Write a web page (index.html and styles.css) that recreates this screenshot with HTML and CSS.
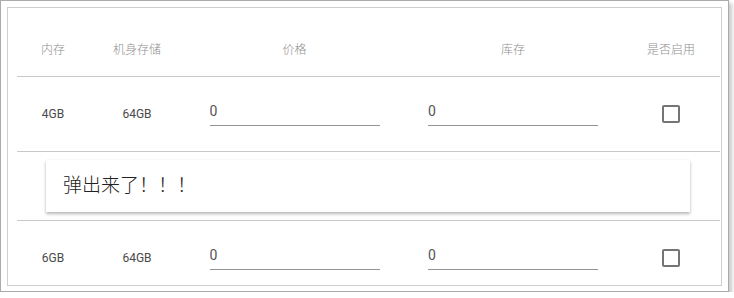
FILE: index.html
```html
<!DOCTYPE html>
<html lang="zh-CN">
<head>
    <meta charset="UTF-8">
    <meta name="viewport" content="width=device-width, initial-scale=1.0">
    <title>弹出测试</title>
    <link rel="stylesheet" href="styles.css">
</head>
<body>
    <div class="frame">
        <div class="panel">
            <table class="sku-table">
                <colgroup>
                    <col class="col-mem">
                    <col class="col-rom">
                    <col class="col-price">
                    <col class="col-stock">
                    <col class="col-on">
                </colgroup>
                <thead>
                    <tr>
                        <th>内存</th>
                        <th>机身存储</th>
                        <th>价格</th>
                        <th>库存</th>
                        <th>是否启用</th>
                    </tr>
                </thead>
                <tbody>
                    <!-- 第一行 -->
                    <tr class="row">
                        <td>4GB</td>
                        <td>64GB</td>
                        <td><input class="field" type="text" value="0"></td>
                        <td><input class="field" type="text" value="0"></td>
                        <td><span class="check"></span></td>
                    </tr>
                    <!-- 弹出的那一行 -->
                    <tr class="popup-row">
                        <td colspan="5">
                            <div class="popup">弹出来了！！！</div>
                        </td>
                    </tr>
                    <tr class="row">
                        <td>6GB</td>
                        <td>64GB</td>
                        <td><input class="field" type="text" value="0"></td>
                        <td><input class="field" type="text" value="0"></td>
                        <td><span class="check"></span></td>
                    </tr>
                </tbody>
            </table>
        </div>
    </div>
</body>
</html>
```

FILE: styles.css
```css
body {
    margin: 0;
    background-color: #fff;
    font-family: Roboto, "Noto Sans CJK SC", sans-serif;
}

.frame {
    box-sizing: border-box;
    width: 729px;
    height: 292px;
    padding: 6px 6px 5px 6px;
    border: 1px solid #ababab;
    box-shadow: 3px 3px 4px rgba(0, 0, 0, 0.22);
}

.panel {
    box-sizing: border-box;
    height: 279px;
    padding: 12px 0 0 9px;
    border: 1px solid #cfcfcf;
    overflow: hidden;
}

.sku-table {
    width: 703px;
    border-collapse: separate;
    border-spacing: 0;
    table-layout: fixed;
}

.col-mem { width: 72px; }
.col-rom { width: 96px; }
.col-price { width: 219px; }
.col-stock { width: 218px; }
.col-on { width: 98px; }

.sku-table th,
.sku-table td {
    box-sizing: border-box;
    padding: 0;
    text-align: center;
    vertical-align: middle;
    border-bottom: 1px solid #c8c8c8;
}

.sku-table th {
    height: 57px;
    font-size: 12px;
    font-weight: 300;
    color: #8f8f8f;
}

.row td {
    height: 75px;
    font-size: 12px;
    color: #4a4a4a;
}

.field {
    display: block;
    box-sizing: border-box;
    width: 170px;
    height: 24px;
    margin: 0 auto 1px auto;
    padding: 0 0 4px 0;
    border: none;
    border-bottom: 1px solid #949494;
    font-family: Roboto, sans-serif;
    font-size: 14px;
    line-height: 19px;
    color: #555;
    background: transparent;
    outline: none;
}

.check {
    display: inline-block;
    box-sizing: border-box;
    width: 18px;
    height: 18px;
    border: 2px solid #757575;
    border-radius: 2px;
    vertical-align: middle;
}

.popup-row td {
    height: 69px;
    padding: 8px 30px 8px 29px;
    text-align: left;
}

.popup {
    height: 52px;
    padding-left: 17px;
    line-height: 52px;
    font-size: 19px;
    font-weight: 300;
    color: #222;
    background-color: #fff;
    box-shadow: 0 2px 3px rgba(0, 0, 0, 0.28), 0 0 1px rgba(0, 0, 0, 0.08);
}
```
